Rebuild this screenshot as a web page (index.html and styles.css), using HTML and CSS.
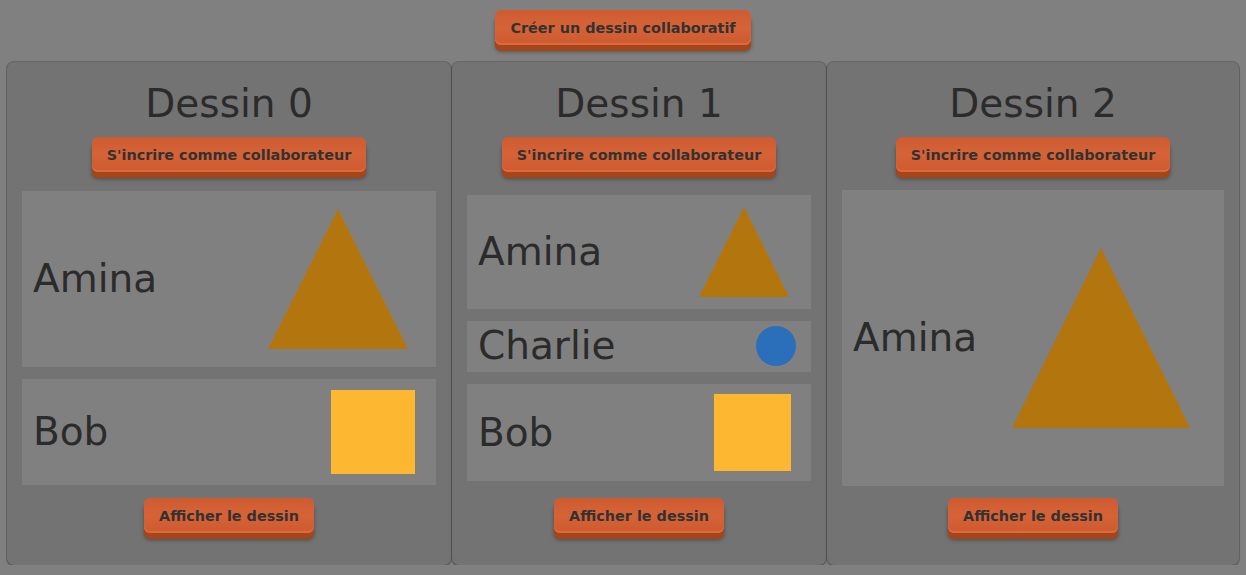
FILE: index.html
```html
<!DOCTYPE html>
<html lang="fr">
<head>
<meta charset="utf-8">
<title>Dessins collaboratifs</title>
<link rel="stylesheet" href="styles.css">
</head>
<body>
<div class="page">
  <div class="top">
    <button class="btn">Créer un dessin collaboratif</button>
  </div>
  <div class="cards">
    <section class="card card-0">
      <h2 class="title">Dessin 0</h2>
      <button class="btn">S'incrire comme collaborateur</button>
      <div class="rows">
        <div class="row row-a0">
          <span class="name">Amina</span>
          <svg class="shape tri-a0" width="140" height="140" viewBox="0 0 140 140"><polygon points="70,0 140,140 0,140" fill="#b3750d"/></svg>
        </div>
        <div class="row row-b0">
          <span class="name">Bob</span>
          <svg class="shape sq-b0" width="84" height="84" viewBox="0 0 84 84"><rect x="0" y="0" width="84" height="84" fill="#fdb730"/></svg>
        </div>
      </div>
      <button class="btn">Afficher le dessin</button>
    </section>
    <section class="card card-1">
      <h2 class="title">Dessin 1</h2>
      <button class="btn">S'incrire comme collaborateur</button>
      <div class="rows">
        <div class="row row-a1">
          <span class="name">Amina</span>
          <svg class="shape tri-a1" width="90" height="90" viewBox="0 0 90 90"><polygon points="45,0 90,90 0,90" fill="#b3750d"/></svg>
        </div>
        <div class="row row-c1">
          <span class="name name-tight">Charlie</span>
          <svg class="shape ci-c1" width="40" height="40" viewBox="0 0 40 40"><circle cx="20" cy="20" r="20" fill="#2b6fba"/></svg>
        </div>
        <div class="row row-b1">
          <span class="name">Bob</span>
          <svg class="shape sq-b1" width="77" height="77" viewBox="0 0 77 77"><rect x="0" y="0" width="77" height="77" fill="#fdb730"/></svg>
        </div>
      </div>
      <button class="btn">Afficher le dessin</button>
    </section>
    <section class="card card-2">
      <h2 class="title">Dessin 2</h2>
      <button class="btn">S'incrire comme collaborateur</button>
      <div class="rows">
        <div class="row row-a2">
          <span class="name">Amina</span>
          <svg class="shape tri-a2" width="178" height="180" viewBox="0 0 178 180"><polygon points="89,0 178,180 0,180" fill="#b3750d"/></svg>
        </div>
      </div>
      <button class="btn">Afficher le dessin</button>
    </section>
  </div>
</div>
</body>
</html>
```
FILE: styles.css
```css
html, body {
  margin: 0;
  padding: 0;
  background: #808080;
}

body {
  font-family: "DejaVu Sans", Verdana, sans-serif;
  color: #2b2b2b;
}

.page {
  padding: 10px 7px 0 7px;
}

.top {
  display: flex;
  justify-content: center;
  margin-bottom: 17px;
}

.btn {
  font-family: "DejaVu Sans", Verdana, sans-serif;
  font-weight: bold;
  font-size: 14.4px;
  line-height: 17px;
  color: #323232;
  background: linear-gradient(to bottom, #cf5b31 0%, #d66337 50%, #cd5a30 100%);
  border: none;
  border-radius: 6px;
  padding: 10px 15px 8px 15px;
  height: 35px;
  box-shadow: inset 0 -2px 0 #dd6a3c, 0 6px 0 #a4461a, 0 7px 4px rgba(0, 0, 0, 0.35);
  cursor: pointer;
}

.cards {
  display: grid;
  grid-template-columns: 444px 374px 412px;
  column-gap: 1px;
}

.card {
  background: #737373;
  border-radius: 7px;
  box-shadow: 0 0 0 1px rgba(70, 70, 70, 0.4), 0 1px 2px rgba(0, 0, 0, 0.35);
  display: flex;
  flex-direction: column;
  align-items: center;
  padding: 20px 15px 0 15px;
  height: 503px;
  box-sizing: border-box;
}

.title {
  font-weight: normal;
  font-size: 39px;
  line-height: 44px;
  margin: 0 0 11px 0;
  color: #2b2b2b;
}

.rows {
  height: 296px;
  align-self: stretch;
  display: flex;
  flex-direction: column;
  justify-content: center;
  gap: 12px;
  margin: 18px 0 12px 0;
}

.row {
  background: #808080;
  display: flex;
  align-items: center;
  justify-content: space-between;
  padding-left: 11px;
}

.name {
  font-size: 39px;
  line-height: 44px;
  color: #2b2b2b;
}

.name-tight {
  line-height: 40px;
}

.shape {
  display: block;
}

.row-a0 { padding-top: 18px; padding-bottom: 18px; }
.tri-a0 { margin-right: 28px; }

.row-b0 { padding-top: 11px; padding-bottom: 11px; }
.sq-b0 { margin-right: 21px; }

.row-a1 { padding-top: 12px; padding-bottom: 12px; }
.tri-a1 { margin-right: 22px; }

.row-c1 { padding-top: 5px; padding-bottom: 6px; }
.ci-c1 { margin-right: 15px; }

.row-b1 { padding-top: 10px; padding-bottom: 10px; }
.sq-b1 { margin-right: 20px; }

.row-a2 { padding-top: 58px; padding-bottom: 58px; }
.tri-a2 { margin-right: 34px; }
```
